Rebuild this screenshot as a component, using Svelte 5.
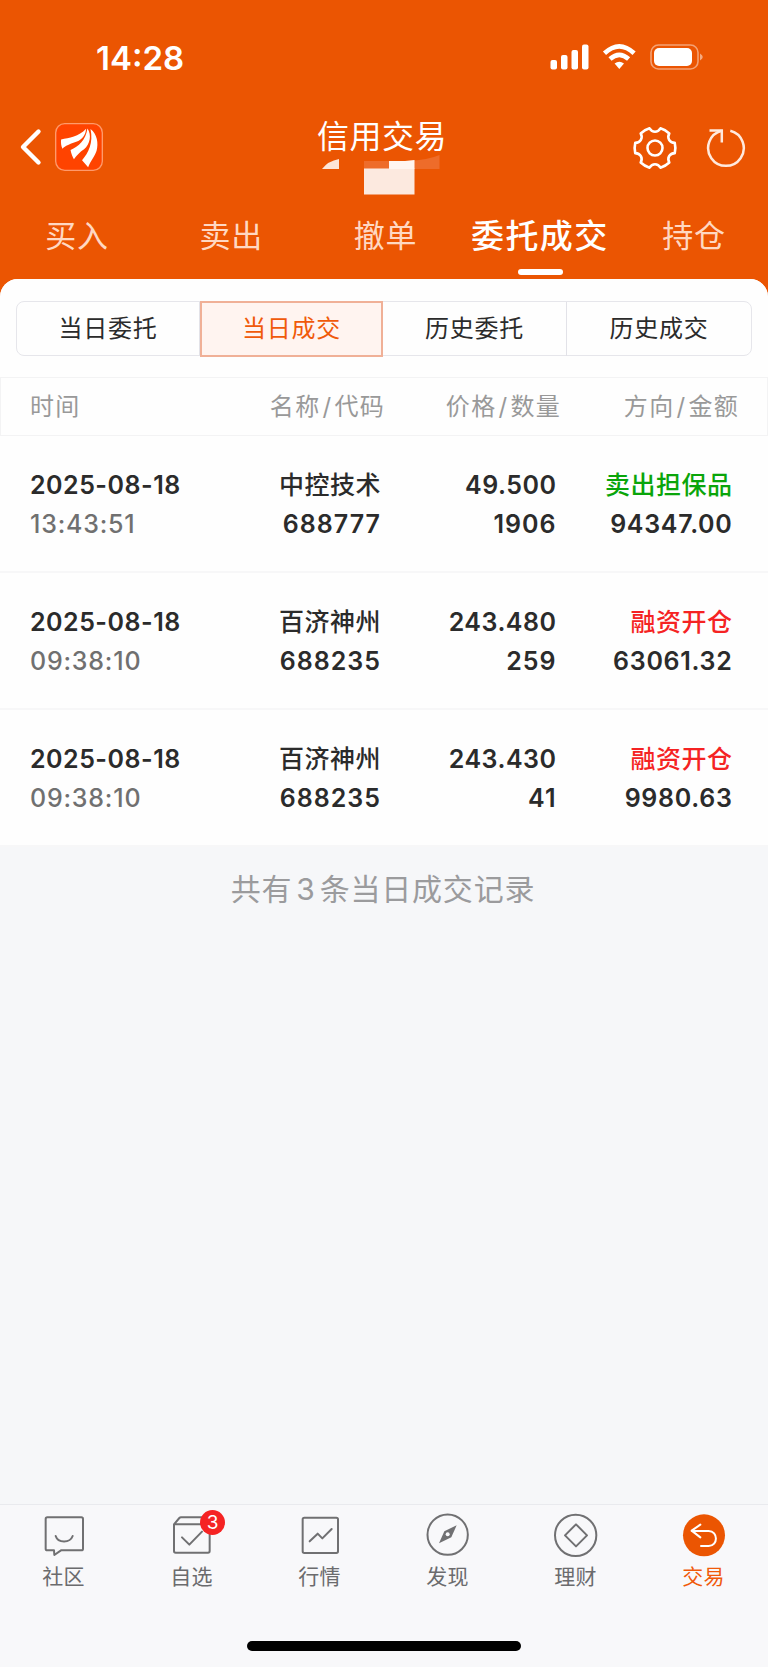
<script>
	const tabs = ['买入', '卖出', '撤单', '委托成交', '持仓'];
	const segments = ['当日委托', '当日成交', '历史委托', '历史成交'];
	const columns = [['时间'], ['名称', '代码'], ['价格', '数量'], ['方向', '金额']];

	let activeTab = $state(3);
	let activeSegment = $state(1);

	const deals = [
		{
			date: '2025-08-18',
			time: '13:43:51',
			name: '中控技术',
			code: '688777',
			price: '49.500',
			count: '1906',
			side: '卖出担保品',
			sell: true,
			amount: '94347.00'
		},
		{
			date: '2025-08-18',
			time: '09:38:10',
			name: '百济神州',
			code: '688235',
			price: '243.480',
			count: '259',
			side: '融资开仓',
			sell: false,
			amount: '63061.32'
		},
		{
			date: '2025-08-18',
			time: '09:38:10',
			name: '百济神州',
			code: '688235',
			price: '243.430',
			count: '41',
			side: '融资开仓',
			sell: false,
			amount: '9980.63'
		}
	];

	const navItems = [
		{ id: 'community', label: '社区' },
		{ id: 'watchlist', label: '自选', badge: 3 },
		{ id: 'market', label: '行情' },
		{ id: 'discover', label: '发现' },
		{ id: 'wealth', label: '理财' },
		{ id: 'trade', label: '交易' }
	];

	// six-lobed outline for the settings icon
	function gearPath(outer, inner, spread) {
		const point = (r, deg) => {
			const a = (deg * Math.PI) / 180;
			return `${(r * Math.cos(a)).toFixed(2)} ${(r * Math.sin(a)).toFixed(2)}`;
		};
		let d = '';
		for (let a = 0; a < 360; a += 60) {
			d += `${a ? 'L' : 'M'}${point(outer, a - spread)}`;
			d += `Q${point(outer + 0.6, a)} ${point(outer, a + spread)}`;
			d += `C${point(inner, a + 20)} ${point(inner, a + 40)} ${point(outer, a + 60 - spread)}`;
		}
		return d + 'Z';
	}
</script>

<div class="page">
	<header>
		<div class="status">
			<span class="clock">14:28</span>
			<svg class="signals" width="156" height="30" viewBox="0 0 156 30" fill="#fff">
				<rect x="1.5" y="18" width="6.5" height="9.5" rx="2" />
				<rect x="12" y="13" width="6.5" height="14.5" rx="2" />
				<rect x="22.5" y="8" width="6.5" height="19.5" rx="2" />
				<rect x="33" y="2.5" width="6.5" height="25" rx="2" />
				<g fill="none" stroke="#fff" stroke-width="4.6">
					<path d="M55.5 11.2Q70.3 -2.6 85.1 11.2" />
					<path d="M61 17Q70.3 8.6 79.6 17" />
				</g>
				<path d="M65.6 21.6Q70.3 17.8 75 21.6L70.3 27Z" />
				<rect x="102" y="3" width="47" height="24" rx="7.5" fill="none" stroke="#fff" stroke-opacity=".45" stroke-width="1.6" />
				<rect x="105" y="6" width="38" height="18" rx="5" />
				<path d="M151 11.5Q156.5 15 151 18.5Z" opacity=".5" />
			</svg>
		</div>

		<div class="titlebar">
			<div class="left">
				<svg width="24" height="40" viewBox="0 0 24 40" fill="none" stroke="#fff" stroke-width="4.4" stroke-linecap="round" stroke-linejoin="round">
					<path d="M19.5 4.5L4 20L19.5 35.5" />
				</svg>
				<svg class="logo" width="48" height="48" viewBox="166 310 142 142">
					<rect x="168" y="312" width="138" height="138" rx="27" fill="#ff4300" stroke="#ff9a6b" stroke-width="4" />
					<g fill="#fff">
						<path d="M184 359C208 353 236 351 258 327C257 346 246 358 231 365C214 371 197 377 188 386C184 378 183 368 184 359Z" />
						<path d="M212 390C236 379 257 360 262 326C275 346 270 371 252 388C240 396 231 405 222 417C217 408 214 400 212 390Z" />
						<path d="M246 420C265 399 280 369 271 328C291 342 295 372 289 392C284 408 271 422 264 441Z" />
					</g>
				</svg>
			</div>
			<div class="center">
				<h1>信用交易</h1>
				<!-- masked account number -->
				<svg width="128" height="42" viewBox="318 154 128 42">
					<path d="M322 169Q328 161 339 159V169Z" fill="#fde5d8" />
					<path d="M364 161H408Q428 160 439.500 155V169H364Z" fill="#ee6c2a" />
					<rect x="364" y="168.500" width="50.500" height="26" fill="#fce9df" />
					<path d="M389 161H405L414.500 160V169H389Z" fill="#fff5f0" />
				</svg>
			</div>
			<div class="right">
				<svg width="46" height="46" viewBox="-23 -23 46 46" fill="none" stroke="#fff" stroke-width="2.600" stroke-linejoin="round">
					<path d={gearPath(20.4, 15.4, 14.5)} />
					<circle r="7.500" />
				</svg>
				<svg width="42" height="42" viewBox="-21 -21 42 42" fill="none" stroke="#ffe9dd" stroke-width="2.500">
					<path d="M4.300 -17.200A17.800 17.800 0 1 1 -4.400 -17.200" />
					<path d="M-16.500 -17.500H-4.200V-5.500" />
				</svg>
			</div>
		</div>

		<nav class="tabs">
			{#each tabs as tab, i}
				<button class:active={i === activeTab} onclick={() => (activeTab = i)}>{tab}</button>
			{/each}
		</nav>
	</header>

	<main>
		<div class="sheet">
			<div class="segments">
				{#each segments as segment, i}
					<button class:active={i === activeSegment} onclick={() => (activeSegment = i)}>{segment}</button>
				{/each}
			</div>

			<div class="head">
				{#each columns as [first, second]}
					<span>{first}{#if second}<i>/</i>{second}{/if}</span>
				{/each}
			</div>

			{#each deals as deal}
				<div class="row">
					<div><b class="date">{deal.date}</b><span class="time">{deal.time}</span></div>
					<div><b class="cn">{deal.name}</b><b>{deal.code}</b></div>
					<div><b class="price">{deal.price}</b><b>{deal.count}</b></div>
					<div>
						<b class="cn" class:sell={deal.sell} class:buy={!deal.sell}>{deal.side}</b>
						<b class="amount">{deal.amount}</b>
					</div>
				</div>
			{/each}
		</div>
		<p class="total">共有<span>{deals.length}</span>条当日成交记录</p>
	</main>

	<footer>
		<nav class="bottom">
			{#each navItems as item}
				<a href="#{item.id}" class:current={item.id === 'trade'}>
					<span class="icon">
						<svg width="44" height="44" viewBox="0 0 132 132" fill="none" stroke="#707072" stroke-width="6" stroke-linejoin="round" stroke-linecap="round">
							{#if item.id === 'community'}
								<path d="M16 13H118Q123 13 123 18V107Q123 112 118 112H57L37 126L36 112H16Q11 112 11 107V18Q11 13 16 13Z" />
								<path d="M41 69C48 91 84 91 92 69" />
							{:else if item.id === 'watchlist'}
								<path d="M12 34L28 15Q30 13 33 13H114Q119 13 119 18V114Q119 119 114 119H17Q12 119 12 114ZM12 34H119" />
								<path d="M36 73L58 95L96 56" />
							{:else if item.id === 'market'}
								<rect x="14" y="14" width="106" height="106" rx="5" />
								<path d="M35 85L59 62L73 76L101 48" />
							{:else if item.id === 'discover'}
								<circle cx="65" cy="65" r="60.500" />
								<path d="M92 37L76 73L39 91L55 55Z" fill="#707072" stroke="none" />
								<circle cx="65" cy="64" r="6" fill="#f8f8fa" stroke="none" />
							{:else if item.id === 'wealth'}
								<circle cx="65" cy="67" r="62" />
								<path d="M66 34L99 67L66 100L33 67Z" />
							{:else}
								<circle cx="66" cy="67" r="63" fill="#eb5502" stroke="none" />
								<path d="M55 35L29 53L55 73M29 54H80C109 54 109 99 80 99H57" stroke="#fff" />
							{/if}
						</svg>
						{#if item.badge}
							<i class="badge">{item.badge}</i>
						{/if}
					</span>
					<span class="label">{item.label}</span>
				</a>
			{/each}
		</nav>
		<div class="home"></div>
	</footer>
</div>

<style>
	:global(body) {
		margin: 0;
		background: #f6f7f9;
	}

	.page {
		width: 768px;
		height: 1667px;
		display: flex;
		flex-direction: column;
		overflow: hidden;
		background: #eb5502;
		font-family: Inter, 'Noto Sans CJK SC', sans-serif;
		color: #2b2b2b;
	}

	button {
		padding: 0;
		border: 0;
		background: none;
		font: inherit;
		color: inherit;
		white-space: nowrap;
	}

	svg {
		display: block;
	}

	header {
		height: 279px;
		flex: none;
		color: #fff;
	}

	.status {
		height: 74px;
		padding: 40px 63px 0 96px;
		box-sizing: border-box;
		display: flex;
		justify-content: space-between;
	}

	.clock {
		font-size: 33px;
		line-height: 36px;
		font-weight: 600;
	}

	.signals {
		margin-top: 2px;
	}

	.titlebar {
		height: 122px;
		display: grid;
		grid-template-columns: 200px 1fr 200px;
	}

	.left {
		display: flex;
		align-items: center;
		gap: 12px;
		height: 48px;
		margin: 49px 0 0 19px;
	}

	.center {
		padding: 40px 4px 0 0;
		display: flex;
		flex-direction: column;
		align-items: center;
	}

	h1 {
		margin: 0;
		height: 40px;
		font-size: 32px;
		line-height: 46px;
		font-weight: 400;
		letter-spacing: 0.500px;
		white-space: nowrap;
	}

	.right {
		display: flex;
		align-items: center;
		justify-content: flex-end;
		gap: 27px;
		height: 48px;
		margin: 50px 21px 0 0;
	}

	.tabs {
		height: 83px;
		display: grid;
		grid-template-columns: repeat(5, 154.25px);
	}

	.tabs button {
		position: relative;
		height: 79px;
		font-size: 31px;
		line-height: 79px;
		letter-spacing: 1px;
		color: #ffd8c2;
	}

	.tabs .active {
		font-size: 33px;
		line-height: 80px;
		font-weight: 500;
		letter-spacing: 1.400px;
		color: #fff;
	}

	.tabs .active::after {
		content: '';
		position: absolute;
		left: 55px;
		bottom: 0;
		width: 45px;
		height: 6px;
		border-radius: 3px;
		background: #fff;
	}

	main {
		flex: 1;
		background: #f6f7f9;
		border-radius: 18px 18px 0 0;
	}

	.sheet {
		padding-top: 22px;
		background: #fefefe;
		border-radius: 18px 18px 0 0;
	}

	.segments {
		display: grid;
		grid-template-columns: 183px 183px 184px 184px;
		height: 53px;
		margin: 0 16px 21px;
		border: 1px solid #e6e6eb;
		border-radius: 8px;
	}

	.segments button {
		font-size: 24px;
		line-height: 52px;
		letter-spacing: 0.800px;
		border-right: 1px solid #e2e2e8;
	}

	.segments button:last-child {
		border-right: 0;
	}

	.segments .active {
		margin: -1px 0;
		border: 2px solid #f0b097;
		background: #fff4f0;
		color: #f05a0a;
	}

	.head,
	.row {
		display: grid;
		box-sizing: border-box;
	}

	.head {
		height: 59px;
		grid-template-columns: 130px 225px 176px 178px;
		padding-left: 29px;
		border: 1px solid #f3f3f4;
		font-size: 24px;
		line-height: 58px;
		letter-spacing: 1.300px;
		color: #999;
	}

	.head i {
		margin: 0 2px;
		font-style: normal;
	}

	.head span:not(:first-child),
	.row div:not(:first-child) {
		text-align: right;
	}

	.row {
		height: 137px;
		padding: 30px 0 0 30px;
		grid-template-columns: 175px 176px 175.500px 176px;
		border-bottom: 2px solid #f7f7f8;
	}

	.row b,
	.time {
		display: block;
		height: 39px;
		font-size: 25px;
		line-height: 39px;
		font-weight: 600;
		letter-spacing: 1px;
	}

	.row .date,
	.row .price {
		letter-spacing: 0.500px;
	}

	.row .amount {
		letter-spacing: 0.700px;
	}

	.row .cn {
		font-weight: 500;
		letter-spacing: 0.500px;
	}

	.row .time {
		font-weight: 500;
		letter-spacing: 0.800px;
		color: #707070;
	}

	.row .sell {
		color: #0aa50a;
	}

	.row .buy {
		color: #f52323;
	}

	.total {
		margin: 20px 2px 0 0;
		text-align: center;
		font-size: 30px;
		line-height: 44px;
		letter-spacing: 0.800px;
		color: #9b9b9d;
	}

	.total span {
		margin: 0 4px;
	}

	footer {
		height: 163px;
		flex: none;
		box-sizing: border-box;
		border-top: 1px solid #e9eaee;
		background: #f8f8fa;
	}

	.bottom {
		display: grid;
		grid-template-columns: repeat(6, 1fr);
		height: 136px;
	}

	.bottom a {
		display: flex;
		flex-direction: column;
		align-items: center;
		padding-top: 8px;
		color: #6b6b6d;
		text-decoration: none;
	}

	.bottom .current {
		color: #f05a0a;
	}

	.icon {
		position: relative;
	}

	.badge {
		position: absolute;
		left: 30px;
		top: -3px;
		width: 25px;
		height: 25px;
		border-radius: 50%;
		background: #f52323;
		color: #fff;
		font-size: 19px;
		line-height: 26px;
		font-style: normal;
		text-align: center;
	}

	.label {
		margin: 5px 1px 0 0;
		font-size: 21px;
		line-height: 30px;
		letter-spacing: 0.300px;
	}

	.home {
		width: 274px;
		height: 10px;
		margin: 0 auto;
		border-radius: 5px;
		background: #000;
	}
</style>
